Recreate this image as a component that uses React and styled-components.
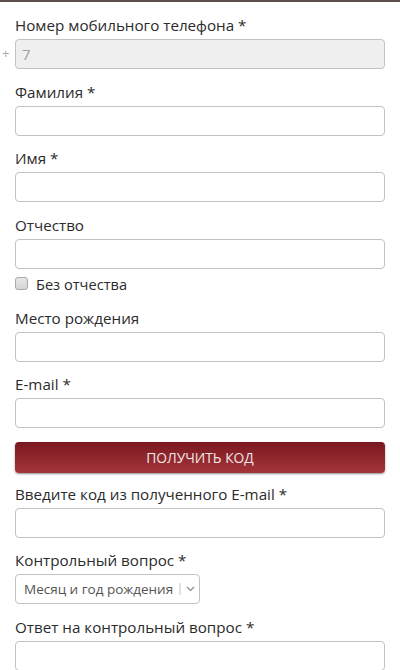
import React from "react";
import styled, { createGlobalStyle } from "styled-components";

const Global = createGlobalStyle`
  html, body { margin: 0; padding: 0; background: #fff; }
  body { font-family: "Open Sans", "Noto Sans", sans-serif; color: #2b2b2b; }
  * { box-sizing: border-box; }
`;

const TopRule = styled.div`
  height: 2px;
  background: #5e4d4d;
`;

const Form = styled.form`
  display: flex;
  flex-direction: column;
  padding: 12px 15px 0;
`;

const Field = styled.div`
  display: flex;
  flex-direction: column;
  margin-bottom: ${(p) => (p.$tight ? "4px" : "11.5px")};
`;

const Label = styled.label`
  font-size: 15.2px;
  line-height: 22px;
  color: #2b2b2b;
  margin-bottom: 3px;
`;

const InputRow = styled.div`
  position: relative;
  display: flex;
`;

const Prefix = styled.span`
  position: absolute;
  left: -13px;
  top: 5px;
  font-size: 13px;
  line-height: 18px;
  color: #aaa;
`;

const Input = styled.input`
  width: 100%;
  height: 30px;
  border: 1px solid #c2c2c2;
  border-radius: 4px;
  background: ${(p) => (p.disabled ? "#efefef" : "#fff")};
  color: #a0a0a0;
  font-family: inherit;
  font-size: 15px;
  padding: 0 6px;
  outline: none;
`;

const CheckRow = styled.label`
  display: flex;
  align-items: center;
  gap: 8px;
  height: 22px;
  margin-bottom: 12px;
  font-size: 14.6px;
  color: #2b2b2b;
`;

const Box = styled.span`
  width: 13px;
  height: 13px;
  border: 1px solid #a8a8a8;
  border-radius: 3px;
  background: linear-gradient(#e6e6e6, #d6d6d6);
`;

const Button = styled.button`
  height: 31px;
  margin: 2px 0 10px;
  border: none;
  border-radius: 4px;
  background: linear-gradient(#7a1820, #a4353a);
  box-shadow: 0 1px 2px rgba(0, 0, 0, 0.45);
  color: #f3e6e6;
  font-family: inherit;
  font-size: 13.8px;
  text-transform: uppercase;
  cursor: pointer;
`;

const SelectBox = styled.div`
  display: flex;
  align-items: center;
  width: 185px;
  height: 30px;
  border: 1px solid #c2c2c2;
  border-radius: 4px;
  background: #fff;
  padding-left: 8px;
`;

const SelectValue = styled.span`
  white-space: nowrap;
  font-size: 13.5px;
  color: #555;
`;

const Divider = styled.span`
  width: 2px;
  height: 12px;
  margin-left: 6px;
  background: #e2e2e2;
`;

const Caret = styled.span`
  display: flex;
  align-items: center;
  justify-content: center;
  flex: 1;
  height: 100%;
  color: #8a8a8a;
`;

const TextField = ({ label, prefix, value, disabled }) => (
  <Field>
    <Label>{label}</Label>
    <InputRow>
      {prefix && <Prefix>{prefix}</Prefix>}
      <Input defaultValue={value} disabled={disabled} />
    </InputRow>
  </Field>
);

export default function App() {
  return (
    <>
      <Global />
      <TopRule />
      <Form onSubmit={(e) => e.preventDefault()}>
        <TextField label="Номер мобильного телефона *" prefix="+" value="7" disabled />
        <TextField label="Фамилия *" />
        <TextField label="Имя *" />
        <Field $tight>
          <Label>Отчество</Label>
          <Input />
        </Field>
        <CheckRow>
          <Box />
          Без отчества
        </CheckRow>
        <TextField label="Место рождения" />
        <TextField label="E-mail *" />
        <Button type="button">Получить код</Button>
        <TextField label="Введите код из полученного E-mail *" />
        <Field>
          <Label>Контрольный вопрос *</Label>
          <SelectBox>
            <SelectValue>Месяц и год рождения</SelectValue>
            <Divider />
            <Caret>
              <svg width="9" height="6" viewBox="0 0 9 6" fill="none" stroke="currentColor" strokeWidth="1.2">
                <path d="M1 1l3.5 3.5L8 1" />
              </svg>
            </Caret>
          </SelectBox>
        </Field>
        <TextField label="Ответ на контрольный вопрос *" />
      </Form>
    </>
  );
}
